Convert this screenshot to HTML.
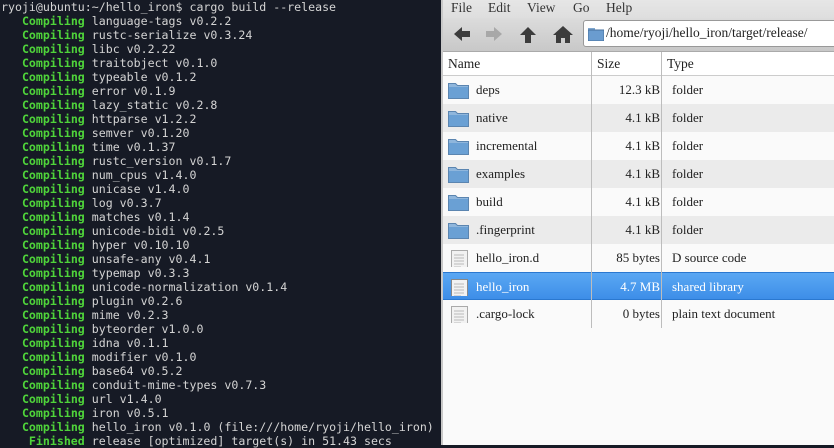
<!DOCTYPE html>
<html><head><meta charset="utf-8"><style>
*{margin:0;padding:0;box-sizing:border-box}
body{width:834px;height:445px;overflow:hidden;background:#161a25;position:relative}
#term{position:absolute;left:0;top:0;width:441px;height:445px;background:#161a25;font-family:"DejaVu Sans Mono","Liberation Mono",monospace;font-size:11.6px;line-height:14px;color:#d4d4d4;white-space:pre;padding-left:1px}
.g{color:#4fd43a;font-weight:bold}
#sep{position:absolute;left:441px;top:0;width:2px;height:445px;background:#c8c8c8}
#fm{position:absolute;left:443px;top:0;width:391px;height:445px;background:#fafafa;font-family:"Liberation Serif",serif;font-size:13px;color:#222}
#menu{height:18px;background:linear-gradient(#e6e6e6,#dedede);font-size:13.5px;color:#333}
#menu span{position:absolute;top:0px}
#tool{position:absolute;top:18px;left:0;width:391px;height:34px;background:linear-gradient(#dcdcdc,#c8c8c8);border-bottom:1px solid #aaa}
#addr{position:absolute;left:140px;top:2px;width:260px;height:27px;background:#fff;border:1px solid #999;border-radius:3px;font-size:13.5px;padding:4px 0 0 22px;color:#222}
#hdr{position:absolute;top:52px;left:0;width:391px;height:24px;background:#fff;border-bottom:1px solid #ccc;font-size:13.5px}
.row{position:absolute;left:0;width:391px;height:28px}
.row span{position:absolute;top:6px}
.alt{background:#ebebeb}
.sel{background:linear-gradient(#5aa7f3,#3d8ee8);color:#fff;border-top:1px solid #2a78d0;border-bottom:1px solid #2a78d0}
.vl{position:absolute;top:52px;width:1px;height:276px;background:#bdbdbd}
.fold{position:absolute;left:5px;top:5px;width:21px;height:18px}
</style></head><body>
<div id="term">ryoji@ubuntu:~/hello_iron$ cargo build --release
   <span class="g">Compiling</span> language-tags v0.2.2
   <span class="g">Compiling</span> rustc-serialize v0.3.24
   <span class="g">Compiling</span> libc v0.2.22
   <span class="g">Compiling</span> traitobject v0.1.0
   <span class="g">Compiling</span> typeable v0.1.2
   <span class="g">Compiling</span> error v0.1.9
   <span class="g">Compiling</span> lazy_static v0.2.8
   <span class="g">Compiling</span> httparse v1.2.2
   <span class="g">Compiling</span> semver v0.1.20
   <span class="g">Compiling</span> time v0.1.37
   <span class="g">Compiling</span> rustc_version v0.1.7
   <span class="g">Compiling</span> num_cpus v1.4.0
   <span class="g">Compiling</span> unicase v1.4.0
   <span class="g">Compiling</span> log v0.3.7
   <span class="g">Compiling</span> matches v0.1.4
   <span class="g">Compiling</span> unicode-bidi v0.2.5
   <span class="g">Compiling</span> hyper v0.10.10
   <span class="g">Compiling</span> unsafe-any v0.4.1
   <span class="g">Compiling</span> typemap v0.3.3
   <span class="g">Compiling</span> unicode-normalization v0.1.4
   <span class="g">Compiling</span> plugin v0.2.6
   <span class="g">Compiling</span> mime v0.2.3
   <span class="g">Compiling</span> byteorder v1.0.0
   <span class="g">Compiling</span> idna v0.1.1
   <span class="g">Compiling</span> modifier v0.1.0
   <span class="g">Compiling</span> base64 v0.5.2
   <span class="g">Compiling</span> conduit-mime-types v0.7.3
   <span class="g">Compiling</span> url v1.4.0
   <span class="g">Compiling</span> iron v0.5.1
   <span class="g">Compiling</span> hello_iron v0.1.0 (file:///home/ryoji/hello_iron)
    <span class="g">Finished</span> release [optimized] target(s) in 51.43 secs</div>
<div id="sep"></div>
<div id="fm">
<div id="menu"><span style="left:8px">File</span><span style="left:45px">Edit</span><span style="left:84px">View</span><span style="left:130px">Go</span><span style="left:163px">Help</span></div>
<div id="tool">
<svg width="140" height="34" style="position:absolute;left:0;top:0">
<g fill="#3c3c3c"><path d="M11 16 L19 9 L19 13 L27 13 L27 19 L19 19 L19 23 Z"/></g>
<g fill="#a8a8a8"><path d="M59 16 L51 9 L51 13 L43 13 L43 19 L51 19 L51 23 Z"/></g>
<g fill="#3c3c3c"><path d="M85 9 L93 17 L88 17 L88 25 L82 25 L82 17 L77 17 Z"/></g>
<g fill="#3c3c3c"><path d="M120 8 L130 17 L127 17 L127 25 L122 25 L122 20 L118 20 L118 25 L113 25 L113 17 L110 17 Z"/></g>
</svg>
<div id="addr"><svg width="16" height="13" style="position:absolute;left:4px;top:7px"><rect x="0" y="0" width="7" height="3" fill="#7fa7cf"/><rect x="0" y="2" width="16" height="11" fill="#6a9ccf" stroke="#456f9c" stroke-width="1"/></svg>/home/ryoji/hello_iron/target/release/</div>
</div>
<div id="hdr"><span style="position:absolute;left:5px;top:4px">Name</span><span style="position:absolute;left:154px;top:4px">Size</span><span style="position:absolute;left:224px;top:4px">Type</span></div>

<div class="row" style="top:76px"><svg class="fold"><path d="M0.5 2.5h7l2 2h11v13h-20z" fill="#8fb6dc" stroke="#5b85b0"/><rect x="1" y="6" width="19" height="11" fill="#6aa0d4"/></svg><span style="left:33px">deps</span><span style="right:174px">12.3 kB</span><span style="left:229px">folder</span></div>
<div class="row alt" style="top:104px"><svg class="fold"><path d="M0.5 2.5h7l2 2h11v13h-20z" fill="#8fb6dc" stroke="#5b85b0"/><rect x="1" y="6" width="19" height="11" fill="#6aa0d4"/></svg><span style="left:33px">native</span><span style="right:174px">4.1 kB</span><span style="left:229px">folder</span></div>
<div class="row" style="top:132px"><svg class="fold"><path d="M0.5 2.5h7l2 2h11v13h-20z" fill="#8fb6dc" stroke="#5b85b0"/><rect x="1" y="6" width="19" height="11" fill="#6aa0d4"/></svg><span style="left:33px">incremental</span><span style="right:174px">4.1 kB</span><span style="left:229px">folder</span></div>
<div class="row alt" style="top:160px"><svg class="fold"><path d="M0.5 2.5h7l2 2h11v13h-20z" fill="#8fb6dc" stroke="#5b85b0"/><rect x="1" y="6" width="19" height="11" fill="#6aa0d4"/></svg><span style="left:33px">examples</span><span style="right:174px">4.1 kB</span><span style="left:229px">folder</span></div>
<div class="row" style="top:188px"><svg class="fold"><path d="M0.5 2.5h7l2 2h11v13h-20z" fill="#8fb6dc" stroke="#5b85b0"/><rect x="1" y="6" width="19" height="11" fill="#6aa0d4"/></svg><span style="left:33px">build</span><span style="right:174px">4.1 kB</span><span style="left:229px">folder</span></div>
<div class="row alt" style="top:216px"><svg class="fold"><path d="M0.5 2.5h7l2 2h11v13h-20z" fill="#8fb6dc" stroke="#5b85b0"/><rect x="1" y="6" width="19" height="11" fill="#6aa0d4"/></svg><span style="left:33px">.fingerprint</span><span style="right:174px">4.1 kB</span><span style="left:229px">folder</span></div>
<div class="row" style="top:244px"><svg class="fold"><rect x="3.5" y="1.5" width="16" height="20" fill="#f2f2f2" stroke="#aaa"/><g stroke="#bbb"><path d="M6 6h10M6 9h10M6 12h10M6 15h10M6 18h7"/></g></svg><span style="left:33px">hello_iron.d</span><span style="right:174px">85 bytes</span><span style="left:229px">D source code</span></div>
<div class="row sel" style="top:272px"><svg class="fold"><rect x="3.5" y="1.5" width="16" height="20" fill="#f2f2f2" stroke="#888"/><g stroke="#bbb"><path d="M6 6h10M6 9h10M6 12h10M6 15h10M6 18h7"/></g></svg><span style="left:33px">hello_iron</span><span style="right:174px">4.7 MB</span><span style="left:229px">shared library</span></div>
<div class="row" style="top:300px"><svg class="fold"><rect x="3.5" y="1.5" width="16" height="20" fill="#f2f2f2" stroke="#aaa"/><g stroke="#bbb"><path d="M6 6h10M6 9h10M6 12h10M6 15h10M6 18h7"/></g></svg><span style="left:33px">.cargo-lock</span><span style="right:174px">0 bytes</span><span style="left:229px">plain text document</span></div>
<div class="vl" style="left:148px"></div>
<div class="vl" style="left:218px"></div>
</div>
</body></html>
